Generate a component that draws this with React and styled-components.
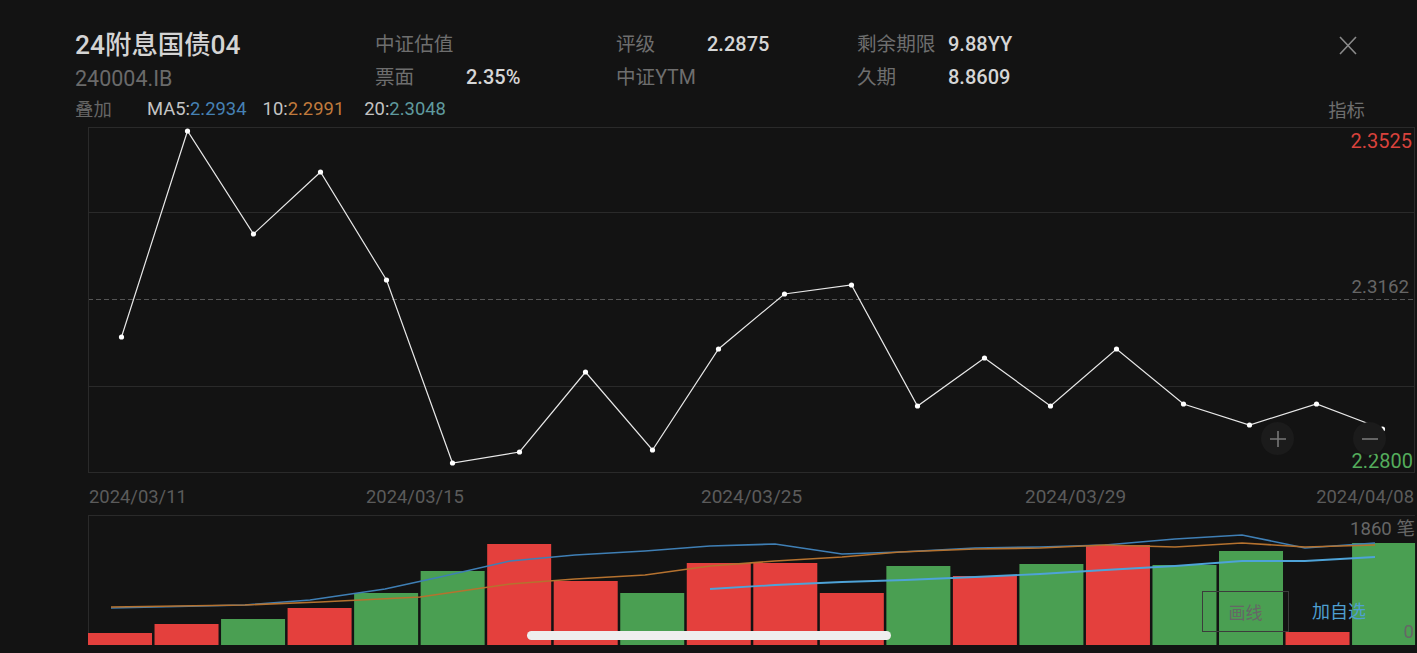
import React from 'react';
import styled, { createGlobalStyle } from 'styled-components';

const Global = createGlobalStyle`
  html, body { margin: 0; padding: 0; background: #131313; overflow: hidden; }
  body { font-family: Roboto, "Noto Sans CJK SC", sans-serif; }
`;

const Page = styled.div`
  position: relative;
  width: 1417px;
  height: 653px;
  overflow: hidden;
  background: #131313;
  color: #d8d8d8;
`;

const Header = styled.header`
  position: relative;
  display: grid;
  grid-template-columns: 300px 241px 241px 1fr;
  grid-auto-rows: 33px;
  padding: 29px 0 0 75px;
  height: 66px;
  box-sizing: content-box;
`;

const Title = styled.div`
  font-size: 26.4px;
  line-height: 33px;
  font-weight: 500;
  color: #d4d4d4;
  white-space: nowrap;
`;

const Code = styled.div`
  font-size: 21.5px;
  line-height: 33px;
  color: #6a6a6a;
`;

const Field = styled.div`
  display: grid;
  grid-template-columns: 91px auto;
  justify-content: start;
  align-items: center;
  align-self: start;
  font-size: 19.6px;
  line-height: 31px;
  white-space: nowrap;
`;

const FieldLabel = styled.span`
  color: #6e6e6e;
`;

const FieldValue = styled.span`
  color: #d6d6d6;
  font-size: 20px;
  font-weight: 500;
`;

const Close = styled.button`
  position: absolute;
  top: 34px;
  left: 1337px;
  width: 22px;
  height: 22px;
  padding: 0;
  border: 0;
  background: none;
  display: block;
`;

const Legend = styled.div`
  display: flex;
  align-items: center;
  height: 28px;
  margin-top: -1px;
  padding: 0 52px 0 75px;
  font-size: 18.4px;
  white-space: nowrap;
`;

const LegendLabel = styled.span`
  color: #666;
  width: 72px;
`;

const LegendItem = styled.span`
  color: #c4c4c4;
  margin-right: ${p => p.$gap}px;
  & > b {
    font-weight: 400;
    color: ${p => p.$color};
  }
`;

const Indicator = styled.span`
  margin-left: auto;
  margin-top: 1px;
  color: #6e6e6e;
`;

const ChartBox = styled.div`
  position: relative;
  height: 346px;
  margin-top: 5px;
`;

const ChartSvg = styled.svg`
  display: block;
  width: 1417px;
  height: 100%;
`;

const Price = styled.span`
  position: absolute;
  right: ${p => p.$right}px;
  top: ${p => p.$top}px;
  font-size: ${p => p.$size}px;
  line-height: 24px;
  color: ${p => p.$color};
`;

const ZoomButton = styled.button`
  position: absolute;
  left: ${p => p.$left}px;
  top: 295px;
  width: 33px;
  height: 33px;
  padding: 0;
  border: 0;
  border-radius: 50%;
  background: #1b1b1b;
  display: flex;
  align-items: center;
  justify-content: center;
`;

const DateRow = styled.div`
  display: flex;
  justify-content: space-between;
  align-items: center;
  box-sizing: border-box;
  height: 42px;
  padding: 4px 3px 0 89px;
  font-size: 18.4px;
  color: #5b5b5b;
`;

const DateLabel = styled.span`
  position: absolute;
  left: ${p => p.$left}px;
  font-size: ${p => p.$size}px;
`;

const VolumeBox = styled.div`
  position: relative;
  height: 138px;
`;

const DrawButton = styled.button`
  position: absolute;
  left: 1202px;
  top: 76px;
  width: 87px;
  height: 41px;
  padding: 0;
  background: transparent;
  border: 1px solid #3c3c3c;
  color: #666;
  font: 17px Roboto, "Noto Sans CJK SC", sans-serif;
`;

const AddButton = styled.span`
  position: absolute;
  left: 1312px;
  top: 85px;
  font-size: 18px;
  line-height: 24px;
  color: #4f9fd0;
`;

const Axis = styled.span`
  position: absolute;
  right: ${p => p.$right}px;
  top: ${p => p.$top}px;
  font-size: 18.6px;
  line-height: 24px;
  color: #666;
`;

const HomeBar = styled.div`
  position: absolute;
  left: 527px;
  top: 631px;
  width: 364px;
  height: 9px;
  border-radius: 5px;
  background: #eeeeee;
`;

const points = [[121.5,337],[187.5,131],[253.5,234],[320.5,172],[386.5,280],[452.5,463],[519.5,452],[585.5,372],[652.5,450],[718.5,349],[784.5,294],[851.5,285],[917.5,406],[984.5,358],[1050.5,406],[1116.5,349],[1183.5,404],[1249.5,425],[1316.5,404],[1382.5,429]];

const RED = '#e4403d';
const GREEN = '#4a9f52';
const bars = [[633,RED],[624,RED],[619,GREEN],[608,RED],[593,GREEN],[571,GREEN],[544,RED],[581,RED],[593,GREEN],[563,RED],[563,RED],[593,RED],[566,GREEN],[576,RED],[564,GREEN],[545,RED],[565,GREEN],[551,GREEN],[632,RED],[543,GREEN]];

const ma1 = '111,608 245,605 310,600 385,589 440,577 510,561 575,555 645,551 710,546 775,544 842,554 900,552 975,548 1040,547 1105,545 1175,539 1242,535 1305,548 1375,543';
const ma2 = '111,607 245,605 320,602 420,597 510,584 575,579 645,575 710,566 775,561 842,557 900,552 975,549 1040,548 1105,545 1175,547 1242,543 1305,547 1375,545';
const ma3 = '710,589 775,585 842,582 905,580 975,577 1040,574 1105,570 1175,566 1242,561 1305,561 1375,557';

const GRID = '#2a2a2a';

function MainChart() {
  const top = 127;
  return (
    <ChartSvg viewBox={`0 ${top} 1417 346`}>
      {[127.5, 212.5, 386.5, 472.5].map(y => (
        <line key={y} x1="88" x2="1415" y1={y} y2={y} stroke={GRID} strokeWidth="1" />
      ))}
      <line x1="88" x2="1415" y1="299.5" y2="299.5" stroke="#555" strokeWidth="1" strokeDasharray="5 3" />
      <line x1="88.5" x2="88.5" y1="127" y2="473" stroke={GRID} />
      <line x1="1414.5" x2="1414.5" y1="127" y2="473" stroke={GRID} />
      <polyline points={points.map(p => p.join(',')).join(' ')} fill="none" stroke="#e8e8e8" strokeWidth="1.2" />
      {points.map(([x, y]) => <circle key={x} cx={x} cy={y} r="2.6" fill="#fff" />)}
    </ChartSvg>
  );
}

function VolumeChart() {
  return (
    <ChartSvg viewBox="0 515 1417 138">
      <line x1="88" x2="1415" y1="515.5" y2="515.5" stroke={GRID} />
      <line x1="88.5" x2="88.5" y1="515" y2="645" stroke={GRID} />
      {bars.map(([y, c], i) => {
        const x = 88 + i * 66.53;
        return <rect key={i} x={x} y={y} width={i === 19 ? 63 : 64} height={645 - y} fill={c} />;
      })}
      <polyline points={ma1} fill="none" stroke="#3f7fb5" strokeWidth="1.6" />
      <polyline points={ma2} fill="none" stroke="#b5722f" strokeWidth="1.6" />
      <polyline points={ma3} fill="none" stroke="#4ea3d8" strokeWidth="1.8" />
    </ChartSvg>
  );
}

const Plus = () => (
  <svg width="18" height="18" viewBox="0 0 18 18"><path d="M9 1v16M1 9h16" stroke="#777" strokeWidth="1.6" fill="none" /></svg>
);
const Minus = () => (
  <svg width="18" height="18" viewBox="0 0 18 18"><path d="M1 9h16" stroke="#777" strokeWidth="1.6" fill="none" /></svg>
);

export default function App() {
  return (
    <Page>
      <Global />
      <Header>
        <Title>24附息国债04</Title>
        <Field><FieldLabel>中证估值</FieldLabel></Field>
        <Field><FieldLabel>评级</FieldLabel><FieldValue>2.2875</FieldValue></Field>
        <Field><FieldLabel>剩余期限</FieldLabel><FieldValue>9.88YY</FieldValue></Field>
        <Code>240004.IB</Code>
        <Field><FieldLabel>票面</FieldLabel><FieldValue>2.35%</FieldValue></Field>
        <Field><FieldLabel>中证YTM</FieldLabel></Field>
        <Field><FieldLabel>久期</FieldLabel><FieldValue>8.8609</FieldValue></Field>
        <Close aria-label="关闭">
          <svg width="22" height="22" viewBox="0 0 22 22"><path d="M3 3l16 17M19 3L3 20" stroke="#8a8a8a" strokeWidth="1.6" fill="none" /></svg>
        </Close>
      </Header>
      <Legend>
        <LegendLabel>叠加</LegendLabel>
        <LegendItem $color="#4681b4" $gap={16}>MA5:<b>2.2934</b></LegendItem>
        <LegendItem $color="#c17a3c" $gap={20}>10:<b>2.2991</b></LegendItem>
        <LegendItem $color="#5f9a9e" $gap={0}>20:<b>2.3048</b></LegendItem>
        <Indicator>指标</Indicator>
      </Legend>
      <ChartBox>
        <MainChart />
        <Price $right={5} $top={2} $size={20} $color="#d8423c">2.3525</Price>
        <Price $right={8} $top={148} $size={18.7} $color="#666">2.3162</Price>
        <Price $right={4} $top={322} $size={20} $color="#54ac5c">2.2800</Price>
        <ZoomButton $left={1261}><Plus /></ZoomButton>
        <ZoomButton $left={1353}><Minus /></ZoomButton>
      </ChartBox>
      <DateRow>
        <span>2024/03/11</span>
        <DateLabel $left={366} $size={18.4}>2024/03/15</DateLabel>
        <DateLabel $left={701} $size={19}>2024/03/25</DateLabel>
        <DateLabel $left={1025} $size={19}>2024/03/29</DateLabel>
        <span>2024/04/08</span>
      </DateRow>
      <VolumeBox>
        <VolumeChart />
        <Axis $right={2} $top={2}>1860 笔</Axis>
        <Axis $right={3} $top={105}>0</Axis>
        <DrawButton>画线</DrawButton>
        <AddButton>加自选</AddButton>
      </VolumeBox>
      <HomeBar />
    </Page>
  );
}
